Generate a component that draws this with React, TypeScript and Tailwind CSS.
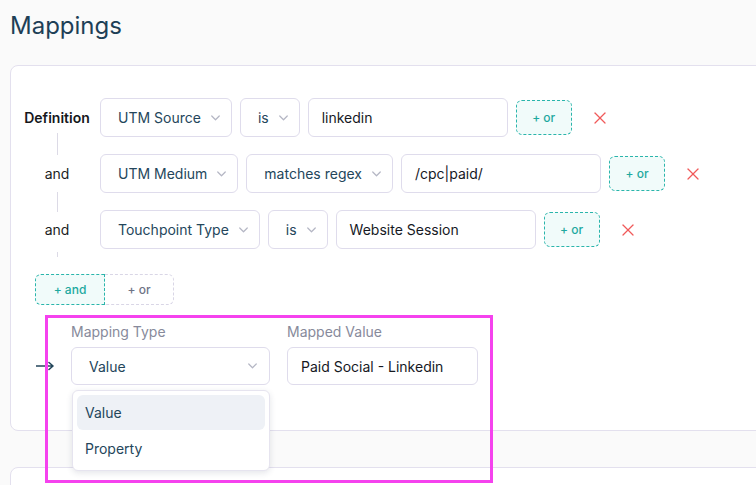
import { X } from 'lucide-react';

type Condition = {
  label: string;
  field: string;
  op: string;
  value: string;
  line: string;
};

const conditions: Condition[] = [
  { label: 'Definition', field: 'UTM Source', op: 'is', value: 'linkedin', line: 'top-[35px] h-[22px]' },
  { label: 'and', field: 'UTM Medium', op: 'matches regex', value: '/cpc|paid/', line: 'top-[38px] h-[20px]' },
  { label: 'and', field: 'Touchpoint Type', op: 'is', value: 'Website Session', line: 'top-[42px] h-[5px]' },
];

function Chevron() {
  return (
    <svg width="9" height="6" viewBox="0 0 9 6" fill="none" className="shrink-0">
      <path d="M0.75 1l3.75 3.75L8.25 1" stroke="#b4b6c4" strokeWidth="1.2" strokeLinecap="round" strokeLinejoin="round" />
    </svg>
  );
}

function Select({ text, className = '' }: { text: string; className?: string }) {
  return (
    <div
      className={`h-[39px] flex items-center gap-[10px] pl-[17px] pr-[11px] bg-white border border-[#dfdcec] rounded-md text-[14px] text-[#24465b] whitespace-nowrap ${className}`}
    >
      <span>{text}</span>
      <Chevron />
    </div>
  );
}

function TextInput({ value, className = '' }: { value: string; className?: string }) {
  return (
    <div
      className={`h-[39px] flex items-center pl-[13px] bg-white border border-[#dfdcec] rounded-md text-[14px] text-[#16191f] whitespace-nowrap ${className}`}
    >
      {value}
    </div>
  );
}

function ConditionRow({ c }: { c: Condition }) {
  return (
    <div className="flex items-center h-[39px]">
      <div className="relative w-[66px] h-[39px] flex items-center justify-center shrink-0">
        <span className={c.label === 'Definition' ? 'text-[14px] font-semibold text-[#15171c]' : 'text-[14px] text-[#1c1e24]'}>
          {c.label}
        </span>
        <div className={`absolute left-[33px] w-px bg-[#dcdae6] ${c.line}`} />
      </div>
      <div className="flex items-center gap-[8px] ml-[10px]">
        <Select text={c.field} />
        <Select text={c.op} />
        <TextInput value={c.value} className="w-[200px]" />
        <button className="h-[35px] w-[56px] rounded-md border border-dashed border-[#2ab5ab] bg-[#f1fbfa] text-[12px] font-medium text-[#1ea99f]">
          + or
        </button>
      </div>
      <X size={20} strokeWidth={1.5} className="text-[#f05a5a] ml-[18px] shrink-0" />
    </div>
  );
}

export default function App() {
  return (
    <div className="relative h-[485px] overflow-hidden bg-[#fafafa] font-['Inter',sans-serif]">
      <div className="pl-[10px] pt-[10px]">
        <h1 className="text-[24px] leading-[32px] text-[#1e3f56]">Mappings</h1>

        <section className="mt-[23px] w-[800px] h-[366px] bg-white border border-[#e3e0ee] rounded-lg pt-[32px] px-[13px]">
          <div className="flex flex-col gap-[17px]">
            {conditions.map((c, i) => (
              <ConditionRow key={i} c={c} />
            ))}
          </div>

          <div className="mt-[25px] ml-[11px] flex w-[139px] h-[31px] text-[12px] font-medium">
            <button className="w-[70px] h-full rounded-l-md border border-dashed border-[#2ab5ab] bg-[#f1fbfa] text-[#1ea99f]">
              + and
            </button>
            <button className="w-[69px] h-full rounded-r-md border border-l-0 border-dashed border-[#d9d6e6] text-[#6e7385]">
              + or
            </button>
          </div>

          <div className="mt-[17px] ml-[12px] flex items-end">
            <div className="w-[35px] h-[38px] flex items-center shrink-0">
              <svg width="19" height="10" viewBox="0 0 19 10" fill="none">
                <path d="M0 5h17M13 1.5L17 5l-4 3.5" stroke="#24465b" strokeWidth="1.6" strokeLinecap="round" strokeLinejoin="round" />
              </svg>
            </div>
            <div className="flex flex-col w-[199px]">
              <span className="text-[14px] leading-[20px] text-[#878a9b] mb-[5px]">Mapping Type</span>
              <div className="relative">
                <div className="h-[38px] flex items-center justify-between pl-[17px] pr-[12px] bg-white border border-[#dfdcec] rounded-md text-[14px] text-[#24465b]">
                  <span>Value</span>
                  <Chevron />
                </div>
                <ul className="absolute left-[1px] top-full mt-[5px] w-[198px] p-[4px] bg-white border border-[#e6e4ef] rounded-md shadow-[0_2px_6px_rgba(30,40,70,0.12)] text-[14px] text-[#24465b] z-10">
                  <li className="h-[35px] flex items-center pl-[8px] rounded-md bg-[#eef1f6]">Value</li>
                  <li className="h-[35px] flex items-center pl-[8px] mt-[1px]">Property</li>
                </ul>
              </div>
            </div>
            <div className="flex flex-col w-[191px] ml-[17px]">
              <span className="text-[14px] leading-[20px] text-[#878a9b] mb-[5px]">Mapped Value</span>
              <div className="h-[38px] flex items-center pl-[13px] bg-white border border-[#dfdcec] rounded-md text-[14px] text-[#16191f]">
                Paid Social - Linkedin
              </div>
            </div>
          </div>
        </section>

        <section className="mt-[36px] w-[800px] h-[80px] bg-white border border-[#e3e0ee] rounded-lg" />
      </div>

      <div className="absolute left-[45px] top-[315px] w-[448px] h-[168px] border-[3px] border-[#f542ee] pointer-events-none z-20" />
    </div>
  );
}
